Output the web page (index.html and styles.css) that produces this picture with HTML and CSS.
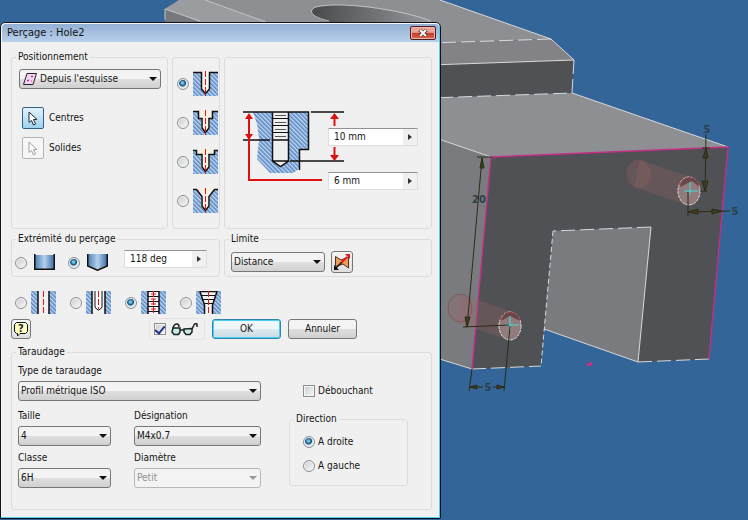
FILE: index.html
```html
<!DOCTYPE html>
<html lang="fr">
<head>
<meta charset="utf-8">
<title>Perçage : Hole2</title>
<link rel="stylesheet" href="styles.css">
</head>
<body>
<svg class="scene" viewBox="0 0 748 520" preserveAspectRatio="xMinYMin slice" aria-hidden="true">
  <defs>
    <linearGradient id="bore"><stop offset="0" stop-color="#48494b"/><stop offset="1" stop-color="#96979a"/></linearGradient>
    <pattern id="hatch" width="3" height="3" patternUnits="userSpaceOnUse" patternTransform="rotate(-45)">
      <rect width="3" height="3" fill="#c3d8f0"/><rect width="1.6" height="3" fill="#5a8ac6"/>
    </pattern>
    <linearGradient id="steel"><stop offset="0" stop-color="#4f7fb5"/><stop offset=".5" stop-color="#b4d0ec"/><stop offset="1" stop-color="#3f6fa8"/></linearGradient>
  </defs>
  <path fill="#8e8f93" d="M165 9L179 0H440L551 39L441 43V60H165Z"/>
  <path fill="#9b9c9f" d="M165 9L179 0H205L266 22H200Z"/>
  <path fill="#77787b" d="M165 9L202 23H165Z"/>
  <path fill="url(#bore)" d="M329 22C310 17 308 10 316 7C338 1 400 9 431 22Z"/>
  <path fill="none" stroke="#c2c3c5" d="M329 21C310 17 308 10 316 7C338 1 400 9 431 21M165 20V9L200 21M205 0L266 22"/>
  <path fill="#838387" d="M430 43L551 39L574 60L430 66Z"/>
  <path fill="#505154" d="M430 65L574 60L572 93L430 98Z"/>
  <path fill="#8d8f93" d="M430 98L572 93L728 147L491 157L430 136Z"/>
  <path fill="#7a7b7e" d="M430 136L491 157L472 369L430 356Z"/>
  <path fill="#505154" d="M491 157L728 147L709 359L638 362L651 227L553 231L541 366L472 369Z"/>
  <path fill="#7a7b7e" d="M553 231L651 227L638 362L544 329Z"/>
  <g fill="none" stroke="#d8d9da">
    <path d="M440 0L551 39L574 60L430 65M572 93L728 147M430 136L491 157M430 356L472 369M544 329L638 362L651 227"/>
    <path stroke-dasharray="14 5" d="M551 39L430 43M574 60L572 93L430 98M651 227L553 231M472 369L541 366M638 362L709 359"/>
    <path stroke-dasharray="5 3" d="M553 231L541 366"/>
  </g>
  <path fill="none" stroke="#c42e86" stroke-width="1.4" d="M472 369L491 157L728 147L709 359"/>
  <g fill="#9b6468" fill-opacity=".28" stroke="#7e4f53" stroke-opacity=".7">
    <path stroke="none" d="M640 160L693 178L687 205L634 187Z"/>
    <ellipse cx="639" cy="174" rx="12" ry="14"/>
    <path stroke="none" d="M461 294L513 312L506 339L455 322Z"/>
    <ellipse cx="460" cy="308" rx="12" ry="14"/>
  </g>
  <g fill="#917b7d" stroke="#e3dedf" stroke-dasharray="3 1">
    <ellipse cx="689" cy="191" rx="11" ry="14"/>
    <ellipse cx="510" cy="326" rx="11" ry="14"/>
  </g>
  <path fill="#67484b" d="M680 187C681 174 698 174 699 187L692 181ZM501 321C503 309 518 309 520 321L510 316Z"/>
  <path fill="none" stroke="#a33c43" stroke-dasharray="3 1" d="M679 185C684 175 697 175 700 187M500 320C504 310 516 310 520 320"/>
  <path fill="none" stroke="#45dcd8" d="M684 191H698M690 182V195M505 325H519M510 316V330"/>
  <g fill="none" stroke="#2c2c16">
    <path d="M477 157H492M482 158L467 327M463 327L509 325M510 326L504 391M472 369L469 391M469 387H483M493 387H504M706 134L705 191M700 191H707M688 192V216M688 212L730 211M702 148H710"/>
    <path fill="#3d3c20" d="M480 168L482 158L484 168ZM465 317L467 327L470 317ZM703 158L706 148L708 158ZM702 181L705 191L708 181ZM698 209L688 212L698 214ZM712 209L722 211L712 214ZM477 385L470 387L477 389ZM497 385L504 387L497 389Z"/>
  </g>
  <g class="dimension">
    <text x="479" y="203">20</text><text x="707" y="133">5</text><text x="735" y="215">5</text><text x="488" y="391">5</text>
  </g>
  <path fill="#d42b86" d="M588 363h2l2-1v3l-2 1h-3v-2z"/>
</svg>

<main class="dialog" aria-labelledby="title">
  <header class="titlebar">
    <h1 id="title">Perçage : Hole2</h1>
    <button class="close" type="button" aria-label="Fermer"><svg width="10" height="8" viewBox="0 0 10 8"><path d="M1.500 1L8.500 7M8.500 1L1.500 7" stroke="#5c2b2b" stroke-width="3.500"/><path d="M2 1L8 7M8 1L2 7" stroke="#fff" stroke-width="2"/></svg></button>
  </header>
  <form class="content">
    <div class="top-row">
      <fieldset class="group">
        <legend>Positionnement</legend>
        <div class="placement">
          <span class="select has-icon">
            <svg class="select-icon" width="14" height="12" viewBox="0 0 14 12"><path d="M4 .5H13.500L10 11.500H.5Z" fill="#f3d5ee" stroke="#222"/><path d="M8 3.500h2M9 2.500v2M4 7.500h2M5 6.500v2M8 8h1" stroke="#c22fa6"/></svg>
            <select aria-label="Positionnement"><option>Depuis l'esquisse</option></select>
          </span>
          <div class="picks">
            <button type="button" class="pick active"><span class="pick-box"><svg width="10" height="15" viewBox="0 0 10 15"><path d="M1 1V11.500L3.500 9.500L5.500 14L7.500 13L5.500 8.500H9Z" fill="#fff" stroke="#1c2a36"/></svg></span>Centres</button>
            <button type="button" class="pick"><span class="pick-box"><svg width="10" height="15" viewBox="0 0 10 15"><path d="M1 1V11.500L3.500 9.500L5.500 14L7.500 13L5.500 8.500H9Z" fill="#fafafa" stroke="#a5a5a5"/></svg></span>Solides</button>
          </div>
        </div>
      </fieldset>
      <div class="group plain hole-kinds" role="radiogroup" aria-label="Type de trou">
        <label><input type="radio" name="kind" aria-label="Percé" checked><svg width="25" height="25" viewBox="0 0 25 25"><path fill="url(#hatch)" d="M0 1H25V25H0Z"/><path d="M8 0H17V18L12.500 23L8 18Z" fill="#f6f5f0"/><path d="M0 1.500H8.500V18L12.500 22.500L16.500 18V1.500H25" fill="none" stroke="#111" stroke-width="1.500"/><path class="axis" d="M12.500 0V25"/></svg></label>
        <label><input type="radio" name="kind" aria-label="Lamé"><svg width="25" height="25" viewBox="0 0 25 25"><path fill="url(#hatch)" d="M0 1H25V25H0Z"/><path d="M5 0H20V8H17V18L12.500 23L8 18V8H5Z" fill="#f6f0e4"/><path d="M0 1.500H5.500V8.500H9V18L12.500 22.500L16 18V8.500H19.500V1.500H25" fill="none" stroke="#111" stroke-width="1.500"/><path class="axis" d="M12.500 0V25"/></svg></label>
        <label><input type="radio" name="kind" aria-label="Lamage plat"><svg width="25" height="25" viewBox="0 0 25 25"><path fill="url(#hatch)" d="M0 1H25V25H0Z"/><path d="M3 0H22V5H17V18L12.500 23L8 18V5H3Z" fill="#f6f0e4"/><path d="M0 1.500H3.500V5.500H9V18L12.500 22.500L16 18V5.500H21.500V1.500H25" fill="none" stroke="#111" stroke-width="1.500"/><path class="axis" d="M12.500 0V25"/></svg></label>
        <label><input type="radio" name="kind" aria-label="Fraisé"><svg width="25" height="25" viewBox="0 0 25 25"><path fill="url(#hatch)" d="M0 1H25V25H0Z"/><path d="M3 0H22L17 8V18L12.500 23L8 18V8Z" fill="#f6f0e4"/><path d="M0 1.500H3.500L9 8.500V18L12.500 22.500L16 18V8.500L21.500 1.500H25" fill="none" stroke="#111" stroke-width="1.500"/><path class="axis" d="M12.500 0V25"/></svg></label>
      </div>
      <div class="group plain">
        <div class="preview">
          <svg class="preview-art" width="102" height="80" viewBox="0 0 102 80">
            <path fill="url(#hatch)" d="M10 4H66V41H56V61L50 65H27L14 51L16 30L14 16Z"/>
            <path fill="#efefef" d="M29.500 4H45.500V53L38 59L29.500 53Z"/>
            <path fill="none" stroke="#111" stroke-width="1.500" d="M0 4H65.500V41.500H56.500V62M68 4H101M0 32H27M47 53H101M29.500 4V53L37.500 58.500L45.500 53V4M29.500 53H45.500M29.500 32H45.500"/>
            <path fill="none" stroke="#111" d="M29.500 10.500H45.500M29.500 17.500H45.500M29.500 24.500H45.500"/>
            <path fill="none" stroke="#555" d="M32 7.500H43M32 14.500H43M32 21.500H43M32 28.500H43"/>
            <path fill="none" stroke="#dd1010" stroke-width="2" d="M6 8V72H79M91.500 9V18M91.500 39V49"/>
            <path fill="#dd1010" d="M2 11L6 5L10 11ZM2 26L6 32L10 26ZM87 11L91.500 5L96 11ZM87 47L91.500 53L96 47Z"/>
          </svg>
          <div class="preview-fields">
            <span class="spin"><input type="text" value="10 mm" aria-label="Profondeur du trou"><button type="button" aria-label="Options de profondeur"></button></span>
            <span class="spin"><input type="text" value="6 mm" aria-label="Profondeur du filetage"><button type="button" aria-label="Options de filetage"></button></span>
          </div>
        </div>
      </div>
    </div>

    <div class="middle-row">
      <fieldset class="group">
        <legend>Extrémité du perçage</legend>
        <div class="tip">
          <label><input type="radio" name="tip" aria-label="Plat"><svg width="21" height="17" viewBox="0 0 21 17"><path fill="url(#steel)" d="M1 1H20V15H1Z"/><path fill="none" stroke="#111" stroke-width="1.500" d="M.750 0V15.250H20.250V0"/></svg></label>
          <label><input type="radio" name="tip" aria-label="Angle" checked><svg width="21" height="17" viewBox="0 0 21 17"><path fill="url(#steel)" d="M1 0H20V12L10.500 16L1 12Z"/><path fill="none" stroke="#111" stroke-width="1.500" d="M.750 0V12L10.500 16.250L20.250 12V0"/></svg></label>
          <span class="spin"><input type="text" value="118 deg" aria-label="Angle de pointe"><button type="button" aria-label="Options d'angle"></button></span>
        </div>
      </fieldset>
      <fieldset class="group">
        <legend>Limite</legend>
        <div class="limit">
          <span class="select"><select aria-label="Limite"><option>Distance</option></select></span>
          <button type="button" class="tool" aria-label="Inverser la direction"><svg width="16" height="16" viewBox="0 0 16 16"><path fill="#f09a58" stroke="#4f3020" d="M1.500 2.500L7 6L14.500 3V14L9 10L1.500 12.500Z"/><path stroke="#111" stroke-width="1.500" d="M2 14L8 8"/><path fill="#111" d="M0 16V11L5 16Z"/><path stroke="#e11a1a" stroke-width="2" d="M8 8L13 3"/><path fill="#e11a1a" d="M16 0V5L11 0Z"/></svg></button>
        </div>
      </fieldset>
    </div>

    <div class="drill-kinds" role="radiogroup" aria-label="Type de perçage">
      <label><input type="radio" name="drill" aria-label="Trou simple"><svg width="25" height="23" viewBox="0 0 25 23"><path fill="url(#hatch)" d="M0 0H7V23H0ZM18 0H25V23H18Z"/><path fill="none" stroke="#111" stroke-width="1.500" d="M7 0V23M18 0V23"/><path class="axis" d="M12.500 0V23"/></svg></label>
      <label><input type="radio" name="drill" aria-label="Trou de passage"><svg width="25" height="23" viewBox="0 0 25 23"><path fill="url(#hatch)" d="M0 0H6V23H0ZM19 0H25V23H19Z"/><path fill="none" stroke="#111" stroke-width="1.500" d="M6 0V23M19 0V23"/><path fill="#fff" stroke="#111" d="M9 -2V16Q12.500 22 16 16V-2"/><path class="axis" d="M12.500 0V18"/></svg></label>
      <label><input type="radio" name="drill" aria-label="Trou taraudé" checked><svg width="25" height="23" viewBox="0 0 25 23"><path fill="url(#hatch)" d="M0 0H25V23H0Z"/><path fill="#f4f4f4" stroke="#111" stroke-width="1.500" d="M7 -2H18V25H7Z"/><path stroke="#111" d="M7 .5H18M7 5.500H18M7 10.500H18M7 15.500H18M7 20.500H18"/><path class="axis" d="M12.500 0V23M10 3H15M10 8H15M10 13H15M10 18H15"/></svg></label>
      <label><input type="radio" name="drill" aria-label="Trou taraudé conique"><svg width="25" height="23" viewBox="0 0 25 23"><path fill="url(#hatch)" d="M0 0H25V23H0Z"/><path fill="#f4f4f4" stroke="#111" stroke-width="1.500" d="M4 .5H21L16.500 14V25H8.500V14Z"/><path stroke="#111" d="M5 4.500H20M7 8.500H18M8 12.500H17"/><path class="axis" d="M12.500 0V23"/></svg></label>
    </div>

    <div class="actions">
      <button type="button" class="tool help" aria-label="Aide"><svg width="14" height="15" viewBox="0 0 14 15"><path fill="#ffffc0" stroke="#111" d="M2.500 .5H11.500L13.500 2.500V9.500L11.500 11.500H6L3.500 14V11.500H2.500L.5 9.500V2.500Z"/><text class="help-mark" x="7" y="10">?</text></svg></button>
      <label class="glasses"><input type="checkbox" aria-label="Aperçu" checked><svg width="27" height="13" viewBox="0 0 27 13"><path fill="#c9ebe4" stroke="#182420" stroke-width="1.500" d="M2 5H9V9L7.500 11.500H3L1 9ZM13 6L21 5.500V9L19 11.500H15L13 9Z"/><path fill="none" stroke="#182420" stroke-width="1.500" d="M9 7H13M2 5Q3 1 6 1Q8 1 8 4M21 6L23 2Q24 0 26 1V4"/></svg></label>
      <button type="submit" class="push default">OK</button>
      <button type="button" class="push">Annuler</button>
    </div>

    <fieldset class="group threading">
      <legend>Taraudage</legend>
      <div class="threading-body">
        <div class="thread-fields">
          <div class="field wide"><label for="thread-type">Type de taraudage</label><span class="select"><select id="thread-type"><option>Profil métrique ISO</option></select></span></div>
          <div class="field"><label for="size">Taille</label><span class="select"><select id="size"><option>4</option></select></span></div>
          <div class="field"><label for="designation">Désignation</label><span class="select"><select id="designation"><option>M4x0.7</option></select></span></div>
          <div class="field"><label for="class">Classe</label><span class="select"><select id="class"><option>6H</option></select></span></div>
          <div class="field"><label for="diameter">Diamètre</label><span class="select disabled"><select id="diameter" disabled><option>Petit</option></select></span></div>
        </div>
        <div class="thread-options">
          <label class="option through"><input type="checkbox">Débouchant</label>
          <fieldset class="group direction">
            <legend>Direction</legend>
            <div class="direction-list">
              <label class="option"><input type="radio" name="direction" checked>A droite</label>
              <label class="option"><input type="radio" name="direction">A gauche</label>
            </div>
          </fieldset>
        </div>
      </div>
    </fieldset>
  </form>
</main>
</body>
</html>
```
FILE: styles.css
```css
* { box-sizing: border-box; }

body {
  margin: 0;
  min-height: 100vh;
  background: #336598;
  color: #141414;
  font: 10px/14px "DejaVu Sans Condensed", "DejaVu Sans", sans-serif;
}

svg { display: block; flex: none; }
button, input, select { font: inherit; color: inherit; margin: 0; padding: 0; }

.scene { position: absolute; inset: 0; width: 100%; height: 100vh; }
.dimension { font: bold 11px "DejaVu Sans Condensed", "DejaVu Sans", sans-serif; fill: #29414b; text-anchor: middle; }
.axis { fill: none; stroke: #ee1111; stroke-dasharray: 6 2; }

.dialog {
  position: absolute;
  top: 22px;
  left: 0;
  width: 59%;
  min-width: 440px;
  padding: 0 8px 8px 10px;
  background: #f0f0f0;
  border: 1px solid #10141a;
  border-radius: 5px 5px 0 0;
  box-shadow: inset -1px -1px #55cdec, inset 1px 1px #f4f8fc;
}

.titlebar {
  display: flex;
  justify-content: space-between;
  align-items: center;
  height: 18px;
  margin: 1px -7px 0 -9px;
  padding: 0 3px 0 5px;
  border-radius: 4px 4px 0 0;
  background: linear-gradient(#93b0d3, #b8d0ec);
}
.titlebar h1 { margin: 0; font-size: 11px; font-weight: normal; }
.close {
  display: grid;
  place-items: center;
  width: 26px;
  height: 14px;
  border: 1px solid #4e1c22;
  border-radius: 2px;
  background: linear-gradient(#eaa297 45%, #c23c26 50%, #d9694c);
  box-shadow: inset 0 0 0 1px #eab5a8;
}

.group {
  min-width: 0;
  margin: 0;
  padding: 0;
  border: 1px solid #dcdcdc;
  border-radius: 3px;
}
.group legend { margin-left: 4px; padding: 0 2px; }
.plain { margin-top: 7px; }

.top-row { display: grid; grid-template-columns: 157px 48px 1fr; gap: 4px; margin-top: 8px; }
.placement { padding: 5px 6px 69px 7px; }
.picks { display: grid; justify-items: start; gap: 8px; margin: 18px 0 0 3px; }
.pick { display: flex; align-items: center; gap: 5px; border: 0; background: none; }
.pick-box {
  display: grid;
  place-items: center;
  width: 22px;
  height: 22px;
  border: 1px solid #b4b4b4;
  border-radius: 2px;
  background: #f6f6f6;
}
.active .pick-box { border-color: #2c628b; background: linear-gradient(#e3f3fb, #9dd2ee); }

.hole-kinds { display: flex; flex-direction: column; gap: 14px; padding: 13px 0 0 4px; }
.hole-kinds label, .drill-kinds label, .tip label { display: flex; align-items: center; gap: 4px; }

.preview { display: grid; grid-template-columns: 85px 90px; justify-content: start; padding: 50px 0 0 18px; }
.preview-art { grid-area: 1 / 1 / 2 / 3; }
.preview-fields { grid-area: 1 / 2 / 2 / 3; display: flex; flex-direction: column; gap: 26px; padding-top: 20px; }

.spin {
  display: flex;
  height: 18px;
  border: 1px solid #dedede;
  border-top-color: #8f9296;
  background: #fff;
}
.spin input { flex: 1; min-width: 0; padding-left: 5px; border: 0; background: none; }
.spin button { display: grid; place-items: center; width: 14px; border: 0; background: #f0f0f0; }
.spin button::after { content: ""; border: 3px solid transparent; border-left: 4px solid #333; border-right: 0; }

.middle-row { display: grid; grid-template-columns: 209px 1fr; gap: 4px; margin-top: 3px; }
.tip { display: grid; grid-template-columns: 53px 56px 83px; align-items: center; height: 30px; padding: 3px 0 0 3px; }
.tip label { gap: 7px; }
.tip .spin { align-self: start; margin-top: 1px; }
.limit { display: flex; align-items: center; gap: 6px; height: 30px; padding: 2px 0 0 6px; }
.limit .select { width: 94px; }

.tool {
  display: grid;
  place-items: center;
  width: 22px;
  height: 22px;
  border: 1px solid #777;
  border-radius: 3px;
  background: linear-gradient(#f5f5f5, #dedede);
}
.help { width: 20px; height: 20px; }
.help-mark { font: bold 10px "DejaVu Sans", sans-serif; text-anchor: middle; fill: #223; }

.drill-kinds { display: grid; grid-template-columns: repeat(4, 55px); margin-top: 14px; padding-left: 4px; }

.actions { display: flex; align-items: center; gap: 7px; height: 22px; margin-top: 4px; }
.glasses {
  display: flex;
  align-items: center;
  gap: 5px;
  height: 22px;
  margin-left: 111px;
  padding: 0 6px 0 4px;
  border: 1px solid #e4e4e4;
  border-radius: 2px;
}
.push {
  width: 69px;
  height: 20px;
  border: 1px solid #777;
  border-radius: 3px;
  background: linear-gradient(#f3f3f3 48%, #dddddd 52%, #d0d0d0);
}
.default {
  border-color: #2f86aa;
  background: linear-gradient(#f0f7fa 48%, #dbe8ee 52%, #cbdbe2);
  box-shadow: inset 0 0 0 1px #48d1f5;
}

.select { position: relative; display: block; }
.select select {
  display: block;
  width: 100%;
  height: 20px;
  padding: 0 18px 0 2px;
  appearance: none;
  border: 1px solid #777;
  border-radius: 3px;
  background: linear-gradient(#f3f3f3 48%, #dfdfdf 52%, #d0d0d0);
}
.select::after {
  content: "";
  position: absolute;
  top: 8px;
  right: 4px;
  border: 4px solid transparent;
  border-top-color: #111;
  border-bottom: 0;
  pointer-events: none;
}
.has-icon select { padding-left: 20px; }
.select-icon { position: absolute; top: 4px; left: 4px; }
.select.disabled select { border-color: #b8b8b8; background: #f3f3f3; color: #929292; opacity: 1; }
.select.disabled::after { border-top-color: #999; }

input[type="radio"], input[type="checkbox"] {
  flex: none;
  width: 12px;
  height: 12px;
  appearance: none;
  border: 1px solid #8c8f92;
  background: linear-gradient(135deg, #c9cccf, #f8f8f8);
  box-shadow: inset 0 0 0 1px #f4f4f4;
}
input[type="radio"] { border-radius: 50%; }
input[type="radio"]:checked { background: radial-gradient(circle at 45% 40%, #6fc3e8 0 1px, #12466f 3px, #d7e3ec 4px); }
input[type="checkbox"]:checked { display: grid; place-items: center; }
input[type="checkbox"]:checked::after {
  content: "";
  width: 4px;
  height: 8px;
  border: solid #26357c;
  border-width: 0 2px 2px 0;
  transform: rotate(40deg);
}

.threading { margin-top: 5px; }
.threading-body { display: grid; grid-template-columns: 243px 1fr; gap: 28px; padding: 5px 23px 21px 6px; }
.thread-fields { display: grid; grid-template-columns: 93px 127px; justify-content: space-between; gap: 5px 0; }
.field label { display: block; margin-bottom: 3px; }
.wide { grid-column: 1 / 3; margin-bottom: 3px; }
.thread-options { padding-top: 20px; }
.option { display: flex; align-items: center; gap: 3px; }
.through { margin-left: 14px; }
.direction { margin-top: 14px; }
.direction-list { display: grid; gap: 10px; padding: 9px 0 12px 13px; }
```
